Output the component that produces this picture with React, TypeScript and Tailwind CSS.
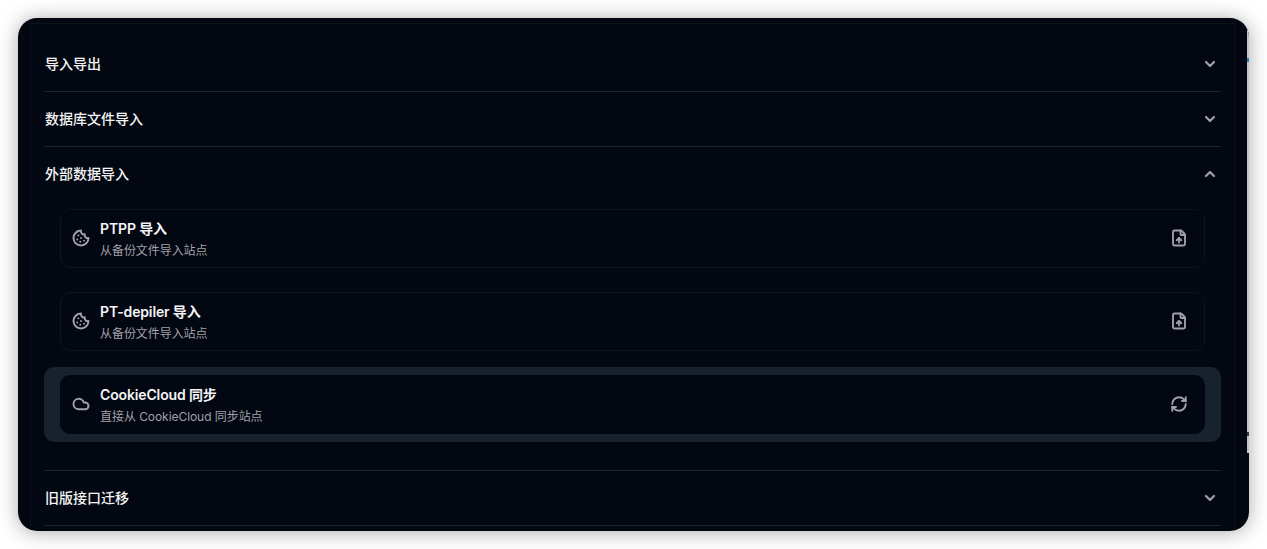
import React, { useState } from 'react';
import { ChevronDown, Cloud, Cookie, FileUp, RefreshCw } from 'lucide-react';

const externalSources = [
  { title: 'PTPP 导入', description: '从备份文件导入站点', icon: Cookie, action: FileUp },
  { title: 'PT-depiler 导入', description: '从备份文件导入站点', icon: Cookie, action: FileUp },
  { title: 'CookieCloud 同步', description: '直接从 CookieCloud 同步站点', icon: Cloud, action: RefreshCw },
];

const sections = ['导入导出', '数据库文件导入', '外部数据导入', '旧版接口迁移'];

const SourceList = () => {
  const [active, setActive] = useState(2);

  return (
    <div className="flex flex-col pb-7">
      {externalSources.map((source, index) => {
        const Icon = source.icon;
        const Action = source.action;
        const isActive = index === active;
        return (
          <button
            key={source.title}
            onClick={() => setActive(index)}
            className={`mb-2 block h-[75px] w-full rounded-[10px] px-4 py-2 text-left last:mb-0 ${isActive ? 'bg-[#18222d]' : ''}`}
          >
            <div
              className={`flex h-[59px] items-center rounded-[10px] border bg-[#030711] pr-4 pl-[11px] ${isActive ? 'border-[#030711]' : 'border-[#0d141f]'}`}
            >
              <Icon size={18} strokeWidth={2.6} className="mb-px shrink-0 text-[#a1a1aa]" />
              <div className="ml-[10px] flex-1 pt-[3px]">
                <p className="text-sm leading-5 font-semibold tracking-[-0.01em] text-[#f4f4f5]">{source.title}</p>
                <p className="mt-0.5 text-xs leading-5 tracking-[-0.005em] text-[#a1a1aa]">{source.description}</p>
              </div>
              <Action size={18} strokeWidth={2.5} className="mb-px shrink-0 text-[#a1a1aa]" />
            </div>
          </button>
        );
      })}
    </div>
  );
};

const ImportSettings = () => {
  const [openSection, setOpenSection] = useState(2);

  return (
    <div className="mr-[14px] ml-3 mt-[5px] h-[520px] border border-[#0b121c] px-[13px] pt-[13px]">
      {sections.map((title, index) => {
        const isOpen = index === openSection;
        return (
          <section key={title} className="border-b border-[#1a2430]">
            <button
              onClick={() => setOpenSection(isOpen ? -1 : index)}
              className="flex h-[54px] w-full items-center justify-between pr-[3px] pl-px text-sm font-medium text-[#f4f4f5]"
            >
              {title}
              <ChevronDown
                size={16}
                strokeWidth={3.2}
                className={`text-[#a1a1aa] ${isOpen ? 'rotate-180' : ''}`}
              />
            </button>
            {isOpen && <SourceList />}
          </section>
        );
      })}
    </div>
  );
};

const App = () => {
  return (
    <div className="h-[549px] w-full overflow-hidden bg-white pt-[18px] pl-[18px] font-['Inter','Noto_Sans_CJK_SC',sans-serif]">
      <div className="h-[513px] w-[1231px] rounded-[19px] shadow-[0_1px_20px_rgba(0,0,0,0.34)]">
        <div className="relative h-full overflow-hidden rounded-[19px] bg-[#030711]">
          <ImportSettings />
          <div className="absolute top-3 right-0 h-[423px] w-[2px] bg-[#c4c4c6]">
            <span className="absolute top-[28px] right-0 h-1 w-[2px] bg-[#1683ab]" />
            <span className="absolute top-[402px] right-0 h-1 w-[2px] bg-[#33363c]" />
          </div>
        </div>
      </div>
    </div>
  );
};

export default App;
